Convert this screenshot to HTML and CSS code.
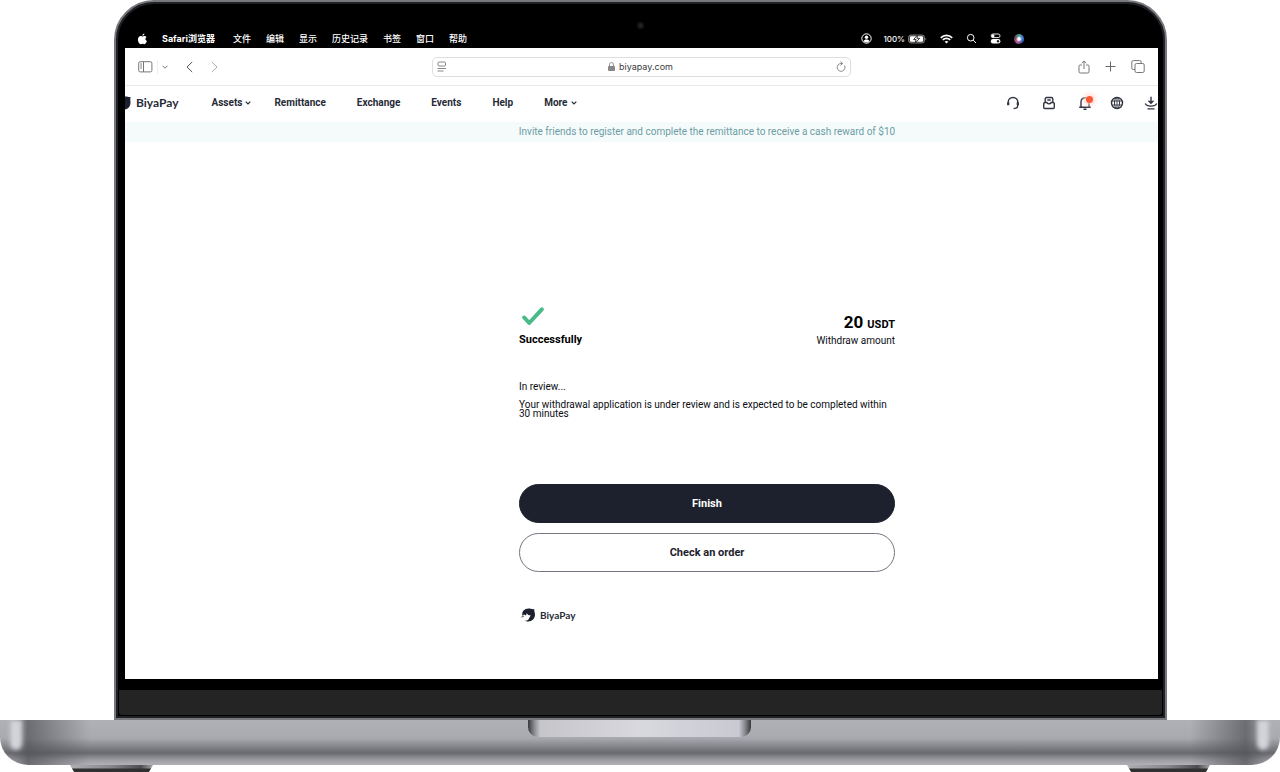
FILE: index.html
```html
<!DOCTYPE html>
<html lang="en">
    <head>
        <meta charset="utf-8">
        <title>BiyaPay</title>
        <link rel="stylesheet" href="styles.css">
    </head>
    <body>
        <div class="lid">
            <div class="camera"></div>
            <div class="display">
                <!-- macOS menu bar -->
                <div class="menubar">
                    <svg class="apple" viewBox="0 0 12 12" fill="#fff">
                        <path d="M8.1 0c.1 1.300-.9 2.500-2.200 2.500C5.800 1.300 6.800.2 8.100 0zM6 3.200c.5 0 1.100-.6 2.200-.6.900 0 1.700.5 2.200 1.200C8.600 4.900 8.900 7.500 10.800 8.300 10.200 10 9.200 11.700 8.100 11.700c-.8 0-1.100-.5-2-.5s-1.300.5-2 .5C2.500 11.700 1 8.900 1 6.600c0-2.500 1.500-4 3.100-4 .9 0 1.400.6 1.900.6z"/>
                    </svg>
                    <b>Safari浏览器</b>
                    <span>文件</span>
                    <span>编辑</span>
                    <span>显示</span>
                    <span>历史记录</span>
                    <span>书签</span>
                    <span>窗口</span>
                    <span>帮助</span>
                    <div class="status">
                        <svg width="11" height="11" viewBox="0 0 11 11">
                            <circle cx="5.500" cy="5.500" r="4.700" fill="none" stroke="#fff"/>
                            <circle cx="5.500" cy="4.300" r="1.700" fill="#fff"/>
                            <path d="M2.500 8.300c.4-2.400 5.600-2.400 6 0-1.500 1.500-4.500 1.500-6 0z" fill="#fff"/>
                        </svg>
                        <span class="percent">100%</span>
                        <svg class="battery" width="19" height="10" viewBox="0 0 19 10">
                            <rect x=".5" y="1" width="16" height="8" rx="2.500" fill="#444" stroke="#777"/>
                            <rect x="2" y="2.300" width="13" height="5.400" rx="1.200" fill="#fff"/>
                            <path d="M17.500 3.700c1.200.4 1.200 2.200 0 2.600z" fill="#777"/>
                            <path d="M9.700.8L5.600 5.600h2.500L7.100 9.300l4.500-5H8.900z" fill="#fff" stroke="#222" stroke-width=".9"/>
                        </svg>
                        <svg width="13" height="10" viewBox="0 0 13 10" fill="none" stroke="#fff" stroke-width="1.700">
                            <path d="M.8 3.800c3.200-3.200 8.200-3.200 11.400 0M2.800 5.900c2.100-2.100 5.300-2.100 7.400 0"/>
                            <path d="M6.500 9.500L4.600 7.600c1-.9 2.800-.9 3.800 0z" fill="#fff" stroke="none"/>
                        </svg>
                        <svg width="11" height="11" viewBox="0 0 11 11" fill="none" stroke="#fff">
                            <circle cx="4.700" cy="4.700" r="3.300"/>
                            <path d="M7.100 7.100l2.900 2.900"/>
                        </svg>
                        <svg width="11" height="11" viewBox="0 0 11 11">
                            <rect x="1.200" y="1" width="8.800" height="3.600" rx="1.800" fill="none" stroke="#fff" stroke-width=".9"/>
                            <circle cx="3" cy="2.800" r="1.500" fill="#fff"/>
                            <rect x=".8" y="6" width="9.600" height="4.500" rx="2.200" fill="#fff"/>
                            <circle cx="8" cy="8.200" r="1.200" fill="#222"/>
                        </svg>
                        <span class="siri"></span>
                    </div>
                </div>

                <!-- Safari toolbar -->
                <div class="toolbar">
                    <div class="tools">
                        <button aria-label="Sidebar">
                            <svg width="15" height="12" viewBox="0 0 15 12" fill="none" stroke="#777">
                                <rect x=".7" y=".7" width="13.200" height="10.200" rx="1.500"/>
                                <path d="M5.500 1v10M2.200 3h1.800M2.200 5h1.800M2.200 7h1.800"/>
                            </svg>
                        </button>
                        <button class="tabs" aria-label="Tab groups">
                            <svg width="6" height="4" viewBox="0 0 6 4" fill="none" stroke="#777"><path d="M.5.700L3 3.200 5.500.700"/></svg>
                        </button>
                        <button class="back" aria-label="Back">
                            <svg width="7" height="12" viewBox="0 0 7 12" fill="none" stroke="#555"><path d="M6.200 1L1 6l5.200 5"/></svg>
                        </button>
                        <button class="forward" aria-label="Forward">
                            <svg width="7" height="12" viewBox="0 0 7 12" fill="none" stroke="#aaa"><path d="M.8 1L6 6 .8 11"/></svg>
                        </button>
                    </div>
                    <div class="address">
                        <svg width="10" height="11" viewBox="0 0 10 11" fill="none" stroke="#888">
                            <rect x="1" y="1" width="7.500" height="4" rx="1"/>
                            <path d="M.5 7.500h8.500M.5 10h6"/>
                        </svg>
                        <label class="url">
                            <svg width="7" height="9" viewBox="0 0 7 9" fill="#888">
                                <rect y="4" width="7" height="5" rx="1"/>
                                <path d="M1.500 4V2.500c0-2.500 4-2.500 4 0V4" fill="none" stroke="#888"/>
                            </svg>
                            <input type="text" value="biyapay.com" aria-label="Address">
                        </label>
                        <button aria-label="Reload">
                            <svg width="10" height="11" viewBox="0 0 10 11" fill="none" stroke="#888">
                                <path d="M8.500 4.500A3.900 3.900 0 1 1 5 2.500h1.500M4.500.500l2.200 2-2.200 2"/>
                            </svg>
                        </button>
                    </div>
                    <div class="tools tools-right">
                        <button aria-label="Share">
                            <svg width="12" height="14" viewBox="0 0 12 14" fill="none" stroke="#777">
                                <path d="M4 5H2.200Q1 5 1 6.200v5.600Q1 13 2.200 13h7.600q1.200 0 1.200-1.200V6.200Q11 5 9.800 5H8M6 9V1M3.700 3.200L6 .9l2.300 2.300"/>
                            </svg>
                        </button>
                        <button aria-label="New tab">
                            <svg width="11" height="11" viewBox="0 0 11 11" stroke="#666"><path d="M5.500.500v10M.5 5.500h10"/></svg>
                        </button>
                        <button aria-label="Tab overview">
                            <svg width="14" height="13" viewBox="0 0 14 13" fill="none" stroke="#777">
                                <rect x="4" y="3.500" width="9.200" height="9" rx="1.500"/>
                                <path d="M4 9.500H2.300Q.8 9.500.8 8V2Q.8.600 2.300.600h6.400q1.500 0 1.500 1.500v1.400"/>
                            </svg>
                        </button>
                    </div>
                </div>

                <nav class="nav">
                    <a class="brand" href="#">
                        <svg width="6" height="16" viewBox="0 0 6 16"><path d="M0 1.500C2 1 3.500 2.500 5.600 2 4.900 3.500 5.600 5.500 5.500 8 5.300 11.500 3 14.200 0 14.500z" fill="#1d212d"/></svg>
                        BiyaPay
                    </a>
                    <a class="assets" href="#">Assets <svg class="caret" viewBox="0 0 6 4"><path d="M.7.700L3 3 5.300.700"/></svg></a>
                    <a href="#">Remittance</a>
                    <a href="#">Exchange</a>
                    <a href="#">Events</a>
                    <a href="#">Help</a>
                    <a href="#">More <svg class="caret" viewBox="0 0 6 4"><path d="M.7.700L3 3 5.300.700"/></svg></a>
                    <div class="nav-icons">
                        <button aria-label="Support">
                            <svg viewBox="0 0 14 14">
                                <path d="M2.200 7.500V6.200C2.200 3.500 4.200 1.500 7 1.500s4.800 2 4.800 4.700v3c0 2-1.500 3.300-4.200 3.300"/>
                                <path d="M2.200 6.300v3M11.800 6.300v3" stroke-width="2.200"/>
                            </svg>
                        </button>
                        <button aria-label="Orders">
                            <svg viewBox="0 0 14 14">
                                <path d="M3.200 6V3Q3.200 1.500 4.700 1.500h4.600q1.500 0 1.500 1.500v3M3 6.500h1.700Q7 9.300 9.300 6.500H11q1.300 0 1.300 1.300v3.500q0 1.200-1.200 1.200H2.900q-1.200 0-1.200-1.200V7.800Q1.700 6.500 3 6.500zM5.300 4h3.400"/>
                            </svg>
                        </button>
                        <button class="bell" aria-label="Notifications">
                            <svg viewBox="0 0 14 14">
                                <path d="M3 11V6c0-5.500 8-5.500 8 0v5M1.200 11.200h11.600M5.500 13.300h3"/>
                            </svg>
                            <span class="dot"></span>
                        </button>
                        <button class="language" aria-label="Language">
                            <svg viewBox="0 0 14 14">
                                <circle cx="7" cy="7" r="5.500"/>
                                <ellipse cx="7" cy="7" rx="2.500" ry="5.500" stroke-width="1"/>
                                <path d="M2 5h10M2 9h10M7 1.500v11" stroke-width=".9"/>
                            </svg>
                        </button>
                        <button aria-label="Download">
                            <svg viewBox="0 0 14 14">
                                <path d="M7 .8v6M4.500 4.700L7 7.200l2.500-2.500M1.300 7.500c1.500 3.500 9.900 3.500 11.400 0M3.500 12.900h7"/>
                            </svg>
                        </button>
                    </div>
                </nav>
                <div class="banner">Invite friends to register and complete the remittance to receive a cash reward of $10</div>

                <main class="content">
                    <div class="result">
                        <div class="summary">
                            <div>
                                <svg class="check" width="22" height="19" viewBox="0 0 22 19"><path d="M2.200 10.500l5 5.500L19.800 2.300"/></svg>
                                <h1>Successfully</h1>
                            </div>
                            <div class="amount">
                                <div class="value">20 <small>USDT</small></div>
                                <div>Withdraw amount</div>
                            </div>
                        </div>
                        <p class="state">In review...</p>
                        <p class="note">Your withdrawal application is under review and is expected to be completed within 30 minutes</p>
                        <button class="button finish">Finish</button>
                        <button class="button">Check an order</button>
                        <div class="footer">
                            <svg width="16" height="14" viewBox="0 0 16 14">
                                <path d="M2.400 7.800C1.500 3.500 4.500.500 8.500.500c2 0 3.300 1 5.800.6-.5 1.500.7 3 .7 5.500 0 4-3 7-6.700 7-1.600 0-2.700-.3-3.600-1 2.600.2 4.100-.7 4.600-2.800l1.500-2.300-2.500-.5-1.600-1.700L6 7.600 4 6.400z" fill="#1d212d"/>
                                <path d="M.6 9.500l2.600-2.200.8 1.800z" fill="#666a73"/>
                            </svg>
                            BiyaPay
                        </div>
                    </div>
                </main>
            </div>
            <div class="chin"></div>
        </div>

        <!-- laptop body -->
        <div class="base">
            <span class="shine"></span>
            <div class="notch"></div>
            <span class="shine"></span>
        </div>
        <div class="feet">
            <span class="foot"></span>
            <span class="foot"></span>
        </div>
    </body>
</html>
```
FILE: styles.css
```css
*{
    box-sizing: border-box;
}

body{
    margin: 0;
    min-height: 100vh;
    display: flex;
    flex-direction: column;
    background-color: white;
    color: #0b0d12;
    font-family: Roboto, "Noto Sans CJK SC", sans-serif;
    font-size: 10px;
}

svg{
    display: block;
    flex: none;
}

a{
    color: inherit;
    text-decoration: none;
}

button{
    padding: 0;
    border: none;
    background: none;
    color: inherit;
    font: inherit;
}

.lid{
    position: relative;
    flex: 1;
    display: flex;
    flex-direction: column;
    margin: 0 113px 0 114px;
    padding: 25px 5px 3px 9px;
    border: 2px solid #77787c;
    border-radius: 40px 40px 0 0;
    background-color: black;
    box-shadow: inset 0 0 0 2px #202126;
}

.camera{
    position: absolute;
    top: 20px;
    left: 50%;
    width: 7px;
    height: 7px;
    margin-left: -4px;
    border: 2px solid #15161a;
    border-radius: 50%;
    background-color: #25272e;
}

.display{
    flex: 1;
    display: flex;
    flex-direction: column;
    margin-right: 2px;
    margin-bottom: 11px;
    background-color: white;
    overflow: hidden;
}

.menubar{
    display: flex;
    align-items: center;
    gap: 15px;
    height: 21px;
    padding: 2px 134px 0 12px;
    background-color: black;
    color: white;
    font-family: Inter, "Noto Sans CJK SC", sans-serif;
    font-size: 9px;
    font-weight: 500;
    white-space: nowrap;
}

.menubar b{
    margin-right: 3px;
}

.apple{
    width: 11px;
    height: 12px;
    margin-right: -1px;
}

.status{
    display: flex;
    align-items: center;
    gap: 13px;
    margin-left: auto;
}

.percent{
    margin-left: -2px;
    font-size: 8px;
}

.battery{
    margin-left: -10px;
}

.siri{
    width: 10px;
    height: 10px;
    border-radius: 50%;
    background: radial-gradient(circle, white 0 15%, transparent 45%), conic-gradient(#4a9a8a, #3b7ad8, #4456a8, #c0508c, #6d4160, #4a9a8a);
}

.toolbar{
    display: grid;
    grid-template-columns: 1fr minmax(100px, 419px) 1fr;
    align-items: center;
    height: 38px;
    border-bottom: 1px solid #e9e9ea;
}

.tools{
    display: flex;
    align-items: center;
    padding-left: 13px;
}

.tabs{
    margin-left: 4px;
    padding: 5px 0 5px 4px;
    border-left: 1px solid #eee;
}

.back{
    margin-left: 18px;
}

.forward{
    margin-left: 18px;
}

.tools-right{
    justify-content: flex-end;
    gap: 15px;
    padding: 0 13px 0 0;
}

.address{
    display: flex;
    align-items: center;
    justify-content: space-between;
    height: 20px;
    padding: 0 4px;
    border: 1px solid #dedee0;
    border-radius: 5px;
}

.url{
    display: flex;
    align-items: center;
    gap: 4px;
}

.url input{
    width: 56px;
    padding: 0;
    border: none;
    color: #3a3a3c;
    font-family: Inter, sans-serif;
    font-size: 9px;
}

.nav{
    display: flex;
    align-items: center;
    gap: 31px;
    height: 36px;
    padding-bottom: 3px;
    color: #272b37;
    font-weight: 700;
    white-space: nowrap;
}

.nav a{
    display: flex;
    align-items: center;
    gap: 3px;
}

.nav .brand{
    gap: 5px;
    margin-right: 2px;
    font-family: Lato, sans-serif;
    font-size: 12px;
}

.nav .assets{
    margin-right: -8px;
}

.caret{
    width: 6px;
    height: 4px;
    fill: none;
    stroke: #272b37;
    stroke-width: 1.2;
}

.nav-icons{
    display: flex;
    gap: 22px;
    margin-left: auto;
}

.nav-icons svg{
    width: 14px;
    height: 14px;
    fill: none;
    stroke: #303440;
    stroke-width: 1.4;
}

.bell{
    position: relative;
    margin-right: -4px;
}

.language{
    margin-right: -2px;
}

.dot{
    position: absolute;
    top: 0;
    right: -1px;
    width: 7px;
    height: 7px;
    border-radius: 50%;
    background-color: #fb5836;
    box-shadow: 0 0 5px 2px #ffd5cb;
}

.banner{
    height: 20px;
    padding-left: 131px;
    background-color: #f5fbfb;
    color: #6d9ba3;
    line-height: 20px;
    text-align: center;
}

.content{
    flex: 1;
    padding: 165px 0 0 131px;
}

.result{
    max-width: 376px;
    margin: 0 auto;
}

.summary{
    display: flex;
    justify-content: space-between;
}

.check{
    margin-left: 3px;
    fill: none;
    stroke: #49ba88;
    stroke-width: 4;
    stroke-linecap: round;
    stroke-linejoin: round;
}

h1{
    margin: 6px 0 0;
    color: black;
    font-size: 11px;
    line-height: 16px;
}

.amount{
    padding-top: 5px;
    line-height: 12px;
    text-align: right;
}

.value{
    color: black;
    font-size: 17px;
    font-weight: 700;
    line-height: 20px;
}

.value small{
    font-size: 11px;
}

.state{
    margin: 31px 0 0;
    line-height: 16px;
}

.note{
    margin: 5px 0 66px;
    line-height: 9px;
}

.button{
    display: block;
    width: 100%;
    height: 39px;
    margin-bottom: 10px;
    border: 1px solid #737780;
    border-radius: 20px;
    color: #1d212d;
    font-size: 11px;
    font-weight: 700;
}

.finish{
    border-color: #1c212d;
    background-color: #1c212d;
    color: white;
}

.footer{
    display: flex;
    align-items: center;
    gap: 4px;
    margin-top: 36px;
    padding-left: 1px;
    color: #272b37;
    font-family: Lato, sans-serif;
    font-weight: 700;
}

.chin{
    height: 25px;
    margin: 0 -2px 0 -6px;
    border-radius: 0 0 3px 3px;
    background-color: #242424;
}

.base{
    display: flex;
    justify-content: space-between;
    height: 45px;
    padding: 0 11px 0 10px;
    border-radius: 0 0 28px 28px;
    background:
        linear-gradient(to right, transparent 8px, rgba(80, 81, 86, 0.7) 28px, transparent 90px),
        linear-gradient(to left, transparent 8px, rgba(80, 81, 86, 0.7) 34px, transparent 90px),
        linear-gradient(#b0b1b6, #a9aaaf 18px, #696a6f 33px, #9c9ca2 40px, #b1b1b7);
    overflow: hidden;
}

.shine{
    width: 12px;
    height: 30px;
    border-radius: 0 0 6px 6px;
    background-color: #d3d3da;
    filter: blur(2px);
}

.notch{
    width: 223px;
    height: 17px;
    border-radius: 0 0 10px 10px;
    background: linear-gradient(to right, #36373b, #87888d 6px, #c5c5ca 12px, #d8d8de 50%, #c9c9d3 calc(100% - 12px), #87888d calc(100% - 6px), #36373b);
}

.feet{
    display: flex;
    justify-content: space-between;
    padding: 0 70px;
}

.foot{
    width: 83px;
    height: 7px;
    background: linear-gradient(transparent 3px, #302f31 4px), linear-gradient(to right, #b0b0b4, #85868a 50%, #4c4d50 85%, #a5a5a9);
    clip-path: polygon(0 0, 100% 0, 95% 100%, 5% 100%);
}
```
